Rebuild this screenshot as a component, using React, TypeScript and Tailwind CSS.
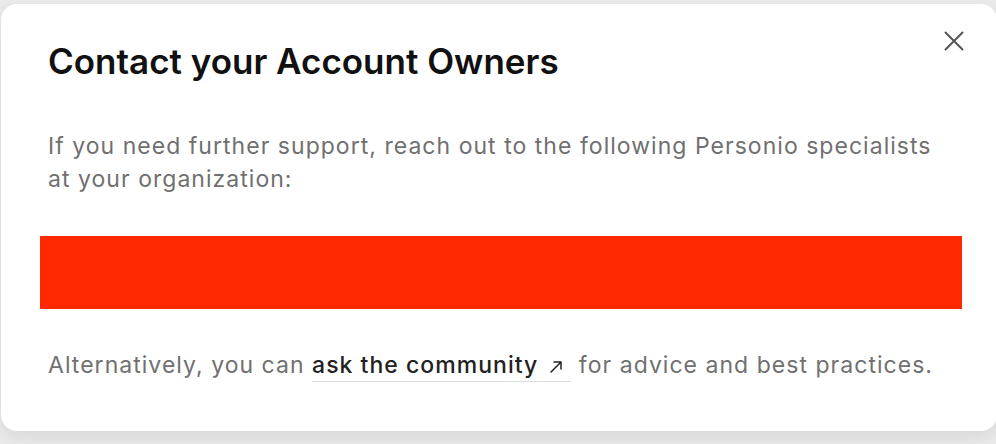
export default function App() {
  return (
    <div className="h-[444px] w-[996px] overflow-hidden bg-[#ebebeb] pt-[4px] pl-[1px] font-['Inter',sans-serif]">
      <div className="relative h-[427px] w-[996px] rounded-[16px] bg-white shadow-[0_6px_18px_rgba(0,0,0,0.09)]">
        <button className="absolute left-[941px] top-[25px] flex h-[24px] w-[24px] items-center justify-center text-[#555]">
          <svg width="20" height="20" viewBox="0 0 20 20" fill="none" stroke="currentColor" strokeWidth="2" strokeLinecap="round">
            <path d="M1.5 1.5L18.5 18.5M18.5 1.5L1.5 18.5" />
          </svg>
        </button>

        <div className="pl-[47px] pt-[37px]">
          <h2 className="text-[35px] font-semibold leading-[40px] text-[#111]">Contact your Account Owners</h2>

          <p className="mt-[49px] w-[900px] text-[23px] leading-[33px] tracking-[1.03px] text-[#707070]">
            If you need further support, reach out to the following Personio specialists at your organization:
          </p>

          <div className="-ml-[8px] mt-[40px] h-[73px] w-[922px] bg-[#ff2800]" />

          <p className="mt-[40px] text-[23px] leading-[33px] tracking-[1.03px] text-[#707070]">
            Alternatively, you can{' '}
            <a className="border-b border-[#dcdcdc] pb-[2px] font-medium text-[#222]" href="#">
              ask the community
              <svg className="ml-[11px] mr-[8px] inline-block align-[-1px]" width="14" height="14" viewBox="0 0 14 14" fill="none" stroke="currentColor" strokeWidth="1.5" strokeLinecap="round" strokeLinejoin="round">
                <path d="M2 12L12 2M5 2H12V9" />
              </svg>
            </a>{' '}
            for advice and best practices.
          </p>
        </div>
      </div>
    </div>
  )
}
